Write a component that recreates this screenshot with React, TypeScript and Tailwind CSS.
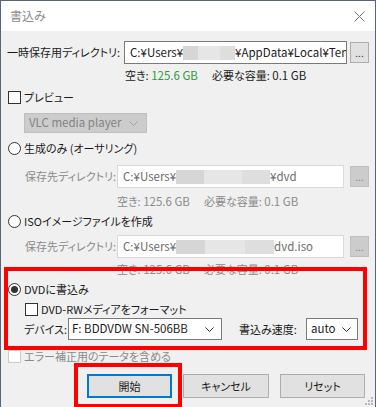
import React from 'react';

const font = "font-['Noto_Sans_CJK_JP','Noto_Sans',sans-serif] [font-feature-settings:'palt']";

function Checkbox({ disabled }: { disabled?: boolean }) {
  return (
    <span
      className={`inline-block w-[13px] h-[13px] border bg-white shrink-0 ${
        disabled ? 'border-[#cccccc]' : 'border-[#333333]'
      }`}
    />
  );
}

function Radio({ checked }: { checked?: boolean }) {
  return (
    <span className="relative inline-flex items-center justify-center w-[13px] h-[13px] rounded-full border border-[#333333] bg-white shrink-0">
      {checked && <span className="w-[7px] h-[7px] rounded-full bg-[#333333]" />}
    </span>
  );
}

function Chevron({ color = '#333333' }: { color?: string }) {
  return (
    <svg width="9" height="5" viewBox="0 0 9 5" className="shrink-0">
      <path d="M0.5 0.5 L4.5 4.5 L8.5 0.5" fill="none" stroke={color} strokeWidth="1" />
    </svg>
  );
}

function Masked({ w }: { w: number }) {
  return (
    <span className="inline-flex h-[14px] shrink-0" style={{ width: w }}>
      <span className="flex-1 bg-[#d6d6d6]" />
      <span className="flex-[1.4] bg-[#e6e6e6]" />
      <span className="flex-1 bg-[#dedede]" />
    </span>
  );
}

function DirButton({ disabled }: { disabled?: boolean }) {
  return (
    <div
      className={`ml-auto w-[19px] h-[21px] border flex items-end justify-center pb-[4px] text-[10px] leading-none ${
        disabled ? 'bg-[#cccccc] border-[#bfbfbf] text-[#838383]' : 'bg-[#e1e1e1] border-[#adadad] text-[#333]'
      }`}
    >
      ...
    </div>
  );
}

function SpaceInfo({ disabled, indent }: { disabled?: boolean; indent: string }) {
  return (
    <div className={`h-[16px] leading-[16px] whitespace-nowrap ${indent} ${disabled ? 'text-[#8a8a8a]' : 'text-[#1a1a1a]'}`}>
      空き: <span className={`text-[11.5px] ${disabled ? '' : 'text-[#2e9a3e]'}`}>125.6 GB</span>
      <span className="ml-[14px]">
        必要な容量: <span className="text-[11.5px]">0.1 GB</span>
      </span>
    </div>
  );
}

export default function App() {
  return (
    <div className={`relative w-[376px] h-[407px] overflow-hidden bg-[#f0f0f0] border-l border-r border-t border-[#53667e] ${font}`}>
      {/* title bar */}
      <div className="h-[30px] bg-white flex items-center pl-[9px] pr-[9px]">
        <span className="text-[12px] text-[#8c8c8c]">書込み</span>
        <svg width="11" height="11" viewBox="0 0 11 11" className="ml-auto mr-[1px]">
          <path d="M0.5 0.5 L10.5 10.5 M10.5 0.5 L0.5 10.5" stroke="#777" strokeWidth="1" />
        </svg>
      </div>

      <div className="px-[6px] pt-[10px] text-[11px] text-[#1a1a1a]">
        {/* temp dir */}
        <div className="flex items-center h-[23px]">
          <span className="w-[117px] shrink-0 whitespace-nowrap">一時保存用ディレクトリ:</span>
          <div className="w-[223px] h-[23px] border border-[#7a7a7a] bg-white flex items-center pl-[5px] overflow-hidden whitespace-nowrap text-[11.5px]">
            <span>C:¥Users¥</span>
            <Masked w={52} />
            <span>¥AppData¥Local¥Ten</span>
          </div>
          <DirButton />
        </div>
        <div className="mt-[3px]">
          <SpaceInfo indent="pl-[118px]" />
        </div>

        {/* preview */}
        <div className="mt-[6px] flex items-center gap-[3px] h-[16px] pl-[1px]">
          <Checkbox />
          <span>プレビュー</span>
        </div>
        <div className="mt-[8px] ml-[17px] w-[123px] h-[20px] bg-[#cccccc] border border-[#bfbfbf] flex items-center pl-[4px] pr-[8px] text-[#838383] text-[11.5px]">
          <span>VLC media player</span>
          <span className="ml-auto">
            <Chevron color="#a0a0a0" />
          </span>
        </div>

        {/* authoring */}
        <div className="mt-[7px] flex items-center gap-[3px] h-[16px] pl-[1px]">
          <Radio />
          <span>生成のみ (オーサリング)</span>
        </div>
        <div className="mt-[9px] flex items-center h-[23px] pl-[18px]">
          <span className="w-[92px] shrink-0 text-[#8a8a8a] whitespace-nowrap">保存先ディレクトリ:</span>
          <div className="w-[227px] h-[23px] border border-[#d9d9d9] bg-white flex items-center pl-[5px] overflow-hidden whitespace-nowrap text-[#6d6d6d] text-[11.5px]">
            <span>C:¥Users¥</span>
            <Masked w={94} />
            <span>¥dvd</span>
          </div>
          <DirButton disabled />
        </div>
        <div className="mt-[5px]">
          <SpaceInfo disabled indent="pl-[110px]" />
        </div>

        {/* iso */}
        <div className="mt-[4px] flex items-center gap-[3px] h-[16px] pl-[1px]">
          <Radio />
          <span>ISOイメージファイルを作成</span>
        </div>
        <div className="mt-[6px] flex items-center h-[23px] pl-[18px]">
          <span className="w-[92px] shrink-0 text-[#8a8a8a] whitespace-nowrap">保存先ディレクトリ:</span>
          <div className="w-[227px] h-[23px] border border-[#d9d9d9] bg-white flex items-center pl-[5px] overflow-hidden whitespace-nowrap text-[#6d6d6d] text-[11.5px]">
            <span>C:¥Users¥</span>
            <Masked w={98} />
            <span>dvd.iso</span>
          </div>
          <DirButton disabled />
        </div>
        <div className="mt-[3px]">
          <SpaceInfo disabled indent="pl-[110px]" />
        </div>

        {/* dvd */}
        <div className="mt-[4px] flex items-center gap-[3px] h-[16px] pl-[1px]">
          <Radio checked />
          <span>DVDに書込み</span>
        </div>
        <div className="mt-[4px] flex items-center gap-[3px] h-[16px] pl-[18px]">
          <Checkbox />
          <span>DVD-RWメディアをフォーマット</span>
        </div>
        <div className="mt-[1px] flex items-center h-[22px] pl-[17px]">
          <span className="w-[44px] shrink-0 whitespace-nowrap">デバイス:</span>
          <div className="w-[154px] h-[22px] border border-[#7a7a7a] bg-white flex items-center pl-[3px] pr-[7px] text-[11.5px] whitespace-nowrap">
            <span>F: BDDVDW SN-506BB</span>
            <span className="ml-auto">
              <Chevron />
            </span>
          </div>
          <span className="ml-[17px] w-[67px] shrink-0 whitespace-nowrap">書込み速度:</span>
          <div className="w-[52px] h-[22px] border border-[#7a7a7a] bg-white flex items-center pl-[4px] pr-[6px] text-[11.5px]">
            <span>auto</span>
            <span className="ml-auto">
              <Chevron />
            </span>
          </div>
        </div>

        {/* ecc */}
        <div className="mt-[8px] flex items-center gap-[3px] h-[16px] pl-[1px] text-[#8a8a8a]">
          <Checkbox disabled />
          <span>エラー補正用のテータを含める</span>
        </div>

        {/* buttons */}
        <div className="mt-[10px] flex items-center gap-[11px] pl-[80px]">
          <button className="w-[85px] h-[24px] bg-[#e1e1e1] border-2 border-[#0078d7] text-[#1a1a1a]">開始</button>
          <button className="w-[86px] h-[24px] bg-[#e1e1e1] border border-[#adadad] text-[#1a1a1a]">キャンセル</button>
          <button className="w-[85px] h-[24px] bg-[#e1e1e1] border border-[#adadad] text-[#1a1a1a]">リセット</button>
        </div>
      </div>

      {/* resize grip */}
      <svg width="8" height="8" viewBox="0 0 8 8" className="absolute right-[2px] bottom-[2px]">
        <rect x="6" y="0" width="2" height="2" fill="#b8b8b8" />
        <rect x="3" y="3" width="2" height="2" fill="#b8b8b8" />
        <rect x="6" y="3" width="2" height="2" fill="#b8b8b8" />
        <rect x="0" y="6" width="2" height="2" fill="#b8b8b8" />
        <rect x="3" y="6" width="2" height="2" fill="#b8b8b8" />
        <rect x="6" y="6" width="2" height="2" fill="#b8b8b8" />
      </svg>

      {/* annotation boxes */}
      <div className="absolute left-[3px] top-[266px] w-[363px] h-[83px] border-[4px] border-[#ff0000]" />
      <div className="absolute left-[73px] top-[362px] w-[108px] h-[45px] border-[4px] border-[#ff0000]" />
    </div>
  );
}
